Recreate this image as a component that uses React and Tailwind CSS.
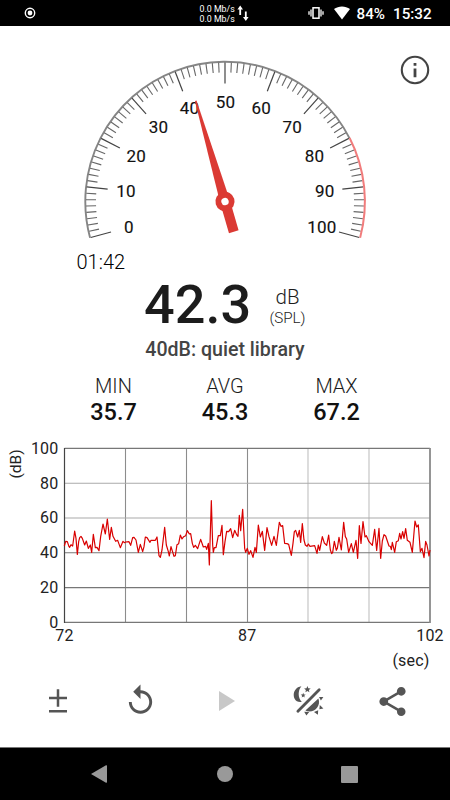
import { MdReplay, MdShare } from "react-icons/md";

// GAUGE CONFIG
const CX = 225;
const CY = 175.5;
const LABELS = [0, 10, 20, 30, 40, 50, 60, 70, 80, 90, 100];
const LEVEL = 42.3;

const polar = (r, value) => {
  const a = ((value * 2.1 - 105) * Math.PI) / 180;
  return [CX + r * Math.sin(a), CY - r * Math.cos(a)];
};

const arc = (r, from, to) => {
  const [x1, y1] = polar(r, from);
  const [x2, y2] = polar(r, to);
  const large = to - from > 85 ? 1 : 0;
  return `M${x1} ${y1}A${r} ${r} 0 ${large} 1 ${x2} ${y2}`;
};

// SOUND HISTORY
const history =
  "193,333 197,319 202,320 207,335 209,337 213,329 218,333 224,288 228,310 232,358 236,320 239,308 243,304 247,310 254,330 259,318 265,340 271,330 275,352 280,298 286,338 291,337 297,347 302,305 309,267 316,297 322,252 329,313 334,277 339,304 347,319 353,316 361,338 369,319 373,323 377,321 387,320 392,331 398,308 402,307 408,315 415,352 421,328 428,350 432,335 436,306 441,308 450,322 453,316 466,316 471,306 477,362 481,367 486,345 494,277 499,330 505,350 508,363 513,335 522,364 526,362 531,329 536,326 541,300 546,312 551,305 557,302 562,287 568,297 572,296 577,325 581,337 586,331 593,341 598,325 602,313 610,336 617,334 620,343 625,325 628,390 634,197 638,330 640,352 643,338 648,338 655,302 661,302 666,271 670,359 675,320 680,289 686,290 692,281 698,308 704,286 710,299 714,304 718,241 722,287 728,223 734,340 737,352 742,340 747,358 752,347 759,367 765,337 769,352 775,270 781,306 787,289 794,346 801,278 807,305 815,331 822,304 829,331 838,262 843,274 848,272 854,325 861,326 866,328 870,345 874,361 879,325 883,290 887,286 893,306 898,286 902,322 907,266 912,315 916,330 921,334 925,327 930,334 944,332 951,355 955,330 959,346 967,305 973,324 980,331 986,300 991,345 995,356 998,352 1003,319 1009,346 1012,340 1017,307 1024,345 1031,262 1036,305 1040,312 1046,352 1054,326 1060,352 1068,316 1073,370 1078,272 1083,325 1089,260 1095,306 1099,302 1107,320 1117,331 1124,283 1130,346 1137,280 1142,370 1147,318 1152,299 1157,303 1167,333 1171,334 1174,344 1177,322 1184,352 1189,320 1195,317 1199,295 1203,312 1208,290 1212,310 1217,281 1222,316 1230,322 1237,352 1245,258 1250,276 1255,270 1261,350 1266,340 1272,368 1277,319 1281,330 1287,363 1290,345";

const stats = [
  { label: "MIN", value: "35.7" },
  { label: "AVG", value: "45.3" },
  { label: "MAX", value: "67.2" },
];

const StatusBar = () => (
  <header className="relative flex h-[26px] items-center bg-black text-white">
    <svg width="12" height="12" viewBox="0 0 12 12" className="ml-[23.5px]">
      <circle cx="6" cy="6" r="4.7" fill="none" stroke="white" strokeWidth="1.4" />
      <circle cx="6" cy="6" r="2.4" fill="white" />
    </svg>
    <div className="ml-[164px] w-9 whitespace-nowrap pt-px text-[8.8px] leading-[10px]">
      <p>0.0 Mb/s</p>
      <p>0.0 Mb/s</p>
    </div>
    <svg width="12" height="18" viewBox="0 0 12 18" className="ml-px" fill="white">
      <path d="M3.2 1.5L6 5.5H4.1V11H2.3V5.5H.4zM8.8 17L6 13H7.9V7.5H9.7V13H11.6z" />
    </svg>
    <svg width="16" height="14" viewBox="0 0 16 14" className="ml-[59px]">
      <rect x="5" y="1.8" width="6" height="10.4" fill="none" stroke="white" strokeWidth="1.5" />
      <path d="M3 3.5v7M13 3.5v7M1 5.3v3.4M15 5.3v3.4" stroke="white" strokeWidth="1.3" />
    </svg>
    <svg width="16" height="14" viewBox="0 0 16 14" className="ml-[10px]" fill="white">
      <path d="M0 3.1C4.6-.4 11.4-.4 16 3.1L8 13.5z" />
    </svg>
    <span className="ml-[7px] w-7 pt-[2px] text-[15.2px] font-medium">84%</span>
    <span className="ml-[8.5px] pt-[2px] text-[15.2px] font-medium">15:32</span>
  </header>
);

const Gauge = () => {
  const ticks = Array.from({ length: 81 }, (_, i) => i);

  return (
    <svg width="450" height="224" viewBox="0 0 450 224" className="block">
      <path d={arc(139.7, 0, 80)} fill="none" stroke="#858585" strokeWidth="1.9" />
      {ticks.map((i) => {
        const major = i % 8 === 0;
        const [x1, y1] = polar(139, i * 1.25);
        const [x2, y2] = polar(major ? 118 : 129, i * 1.25);
        return (
          <line
            key={i}
            x1={x1}
            y1={y1}
            x2={x2}
            y2={y2}
            stroke={major ? "#444" : "#666"}
            strokeWidth={major ? 1.2 : 1.1}
          />
        );
      })}
      <path d={arc(139.9, 80, 100)} fill="none" stroke="#f17c7c" strokeWidth="2" />
      {LABELS.map((n) => {
        const [x, y] = polar(100, n);
        return (
          <text key={n} x={x + 0.4} y={y + 6} textAnchor="middle" fontSize="17" fill="#111" stroke="#111" strokeWidth="0.15" letterSpacing=".2">
            {n}
          </text>
        );
      })}
      {/* NEEDLE */}
      <g transform={`translate(${CX} ${CY}) rotate(${LEVEL * 2.1 - 105})`} fill="#db3a34">
        <path d="M-.8-105H.8L5 0V31.5H-5V0z" />
        <circle r="9.6" />
        <circle r="3.7" fill="white" />
      </g>
    </svg>
  );
};

const Chart = () => (
  <svg width="450" height="235" viewBox="0 435 450 235" className="block" fill="#222">
    {[125.5, 186.5, 247.5, 308, 369].map((x) => (
      <line key={x} x1={x} x2={x} y1="448.5" y2="622.5" stroke={x > 300 ? "#c0c0c0" : "#8c8c8c"} strokeWidth="1.1" />
    ))}
    {[0, 20, 40, 60, 80, 100].map((n) => {
      const y = 622.4 - n * 1.74;
      return (
        <g key={n}>
          <line x1="64.5" x2="430" y1={y} y2={y} stroke={n === 60 || n === 80 ? "#aaa" : "#777"} strokeWidth="1.1" />
          <text x="58.5" y={y + 5.4} textAnchor="end" fontSize="16" letterSpacing=".2">{n}</text>
        </g>
      );
    })}
    <path d="M64.5 448V623" stroke="#444" strokeWidth="1.2" />
    <path d="M430 448V623" stroke="#8a8a8a" strokeWidth="1.8" />
    <g transform="translate(0 435) scale(.33333)">
      <polyline points={history} fill="none" stroke="#d90000" strokeWidth="3.6" strokeLinejoin="round" />
    </g>
    <g fontSize="16" textAnchor="middle">
      <text x="64.5" y="641" letterSpacing=".2">72</text>
      <text x="247.3" y="641" letterSpacing=".2">87</text>
      <text x="430" y="641" letterSpacing=".2">102</text>
      <text x="411" y="666" letterSpacing=".2">(sec)</text>
      <text transform="translate(20.5 464) rotate(-90)" fontSize="15.5">(dB)</text>
    </g>
  </svg>
);

const DayNightIcon = () => (
  <svg width="32" height="32" viewBox="0 0 32 32" fill="#555">
    <path d="M8.4 1.2C1.4 2-.7 9.5 1.6 13.7C3 16.4 5.5 17.4 8.8 16.9C4.7 13 4.7 5.5 8.4 1.2z" />
    <path d="M14.4 1l.9 2.2 2.4.2-1.8 1.6.5 2.3-2-1.2-2 1.2.5-2.3-1.8-1.6 2.4-.2zM10.2 7.8l.7 1.7 1.8.1-1.4 1.2.4 1.8-1.5-1-1.5 1 .4-1.8-1.4-1.2 1.8-.1z" />
    <path d="M4.9 26.2L26.2 4.7" stroke="#555" strokeWidth="2.8" strokeLinecap="round" />
    <path d="M25.4 13.4C28.4 21.5 20.4 29 12.4 25.6zM26 12h4.4l-2.5 3.6zM26.8 20l3.6 3.4-4 .9zM21 27l4.2-1.8-.3 4.6zM11.2 26.8l5 .2-2.8 3.4z" />
  </svg>
);

const Toolbar = () => (
  <div className="flex h-[62px] items-center text-[#555]">
    <svg width="18" height="26" viewBox="0 0 18 26" className="ml-[48.5px]" stroke="currentColor" strokeWidth="2.5">
      <path d="M0 10H18M9 1.2V18.7M0 23.2H18" />
    </svg>
    <MdReplay size={35} className="ml-[56.5px] -translate-y-px" />
    <svg width="16" height="20" viewBox="0 0 16 20" className="ml-[60.5px]" fill="#c8c8c8">
      <path d="M0 0L16 10L0 20z" />
    </svg>
    <div className="ml-[58.5px]">
      <DayNightIcon />
    </div>
    <MdShare size={35} className="ml-[50px]" />
  </div>
);

const NavBar = () => (
  <nav className="flex h-[53px] items-center border-t border-[#777] bg-black">
    <svg width="16" height="18" viewBox="0 0 16 18" className="ml-[91px]" fill="#999">
      <path d="M0 9L15 .3Q16 0 16 1V17Q16 18 15 17.7z" />
    </svg>
    <div className="ml-[110px] size-4 rounded-full bg-[#999]" />
    <div className="ml-[108px] size-[17px] rounded-[1px] bg-[#999]" />
  </nav>
);

export default function App() {
  return (
    <div className="flex h-[800px] w-[450px] flex-col overflow-hidden bg-white font-['Roboto',sans-serif] text-[#1c1c1c]">
      <StatusBar />

      <main className="relative h-[721px]">
        <svg width="30" height="30" viewBox="0 0 30 30" className="absolute top-[29px] left-[400px]">
          <circle cx="15" cy="15" r="13.2" fill="none" stroke="#444" strokeWidth="2.1" />
          <path d="M15 8v2.8M15 13.5v8.7" stroke="#444" strokeWidth="2.8" />
        </svg>

        <Gauge />
        <p className="h-6 pl-[76.5px] text-xl leading-6 font-light text-black">01:42</p>

        {/* CURRENT LEVEL */}
        <div className="flex h-[60px] pl-36">
          <p className="w-[108px] text-[54px] leading-[61px] font-medium">{LEVEL}</p>
          <div className="ml-[13px] flex w-[45px] flex-col items-center pt-[12px]">
            <span className="text-[20.5px] leading-[22px] font-light">dB</span>
            <span className="text-[15.2px] leading-[20px] font-light">(SPL)</span>
          </div>
        </div>
        <p className="h-[39px] pt-[4px] text-center text-[19.6px] leading-[24px] font-medium text-[#444]">
          40dB: quiet library
        </p>

        {/* MIN / AVG / MAX */}
        <div className="flex h-[62px] justify-center">
          {stats.map((s) => (
            <div key={s.label} className="w-[111.5px] text-center">
              <p className="text-xl leading-[27px] font-light">{s.label}</p>
              <p className="text-[23.5px] leading-6 font-medium text-[#111]">{s.value}</p>
            </div>
          ))}
        </div>

        <Chart />
        <Toolbar />
      </main>

      <NavBar />
    </div>
  );
}
